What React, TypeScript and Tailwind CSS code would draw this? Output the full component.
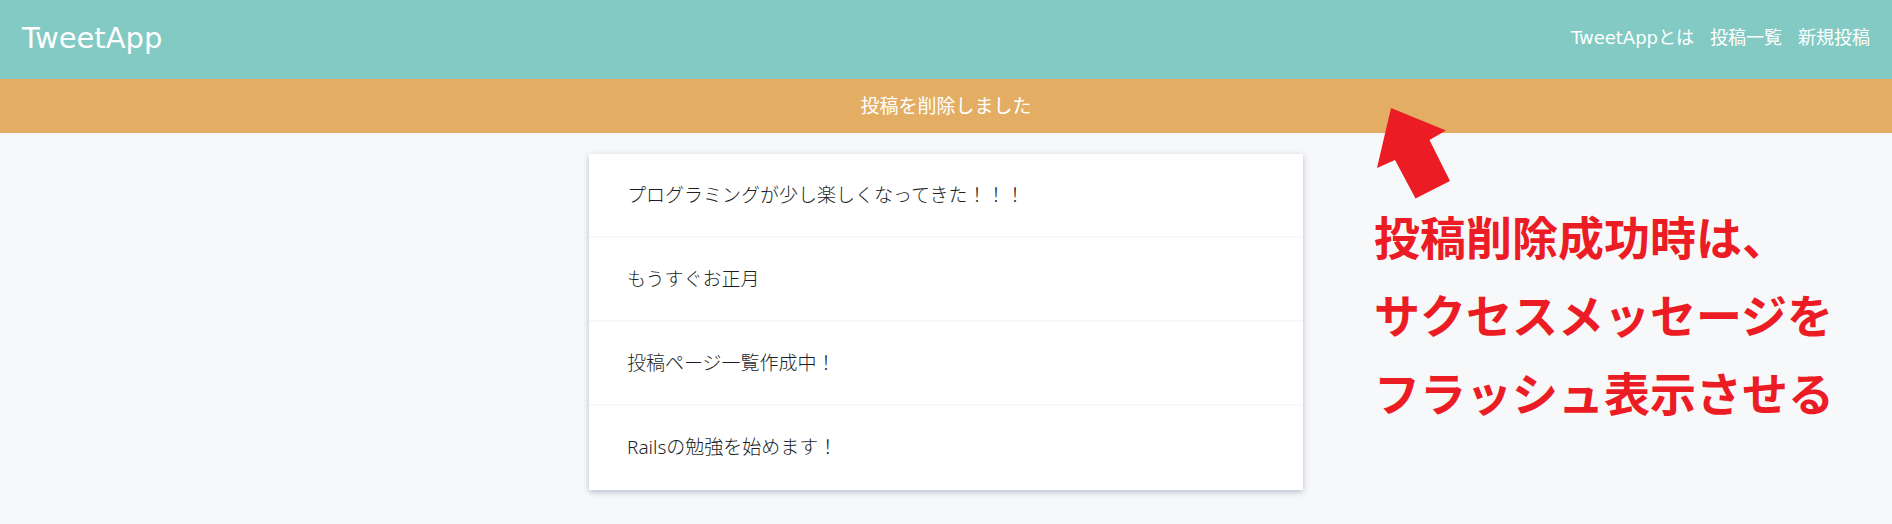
const links = ["TweetAppとは", "投稿一覧", "新規投稿"];

const posts = [
  "プログラミングが少し楽しくなってきた！！！",
  "もうすぐお正月",
  "投稿ページ一覧作成中！",
  "Railsの勉強を始めます！",
];

function Header() {
  return (
    <header className="flex h-[79px] items-center justify-between bg-[#82cac3] px-[22px] pb-1 text-white">
      <a href="#top" className="text-[29px] leading-9">
        TweetApp
      </a>
      <nav>
        <ul className="flex gap-4 text-[18px] leading-6">
          {links.map((label) => (
            <li key={label}>
              <a href="#posts">{label}</a>
            </li>
          ))}
        </ul>
      </nav>
    </header>
  );
}

function Annotation() {
  return (
    <aside className="absolute top-[108px] right-[58px] text-[#ec1c24]">
      <svg className="ml-[3px] block h-[92px] w-[73px]" viewBox="0 0 73 92" fill="currentColor" aria-hidden="true">
        <path d="M14 0 69 22.500 52.500 32 73 73 38.500 90.500 18 52 0 60Z" />
      </svg>
      <p className="text-[46px] leading-[78px] font-bold whitespace-nowrap">
        投稿削除成功時は、
        <br />
        サクセスメッセージを
        <br />
        フラッシュ表示させる
      </p>
    </aside>
  );
}

export default function App() {
  return (
    <div
      lang="ja"
      className="relative min-h-screen bg-[#f7f8fa] font-['DejaVu_Sans','Noto_Sans_CJK_JP',sans-serif] text-[#2b2e38]"
    >
      <Header />
      <div role="status" className="bg-[#e3ae64] py-[14px] text-center text-[19px] leading-[26px] text-white">
        投稿を削除しました
      </div>
      <main id="posts" className="px-4 py-[21px]">
        <ul className="mx-auto max-w-[714px] bg-white shadow-[0_2px_6px_#b4bcc8]">
          {posts.map((post) => (
            <li
              key={post}
              className="border-b-2 border-[#f7f8fa] px-[38px] py-7 font-['Noto_Sans','Noto_Sans_CJK_JP',sans-serif] text-[19px] leading-[26px] font-light text-[#1c1f28] last:border-white"
            >
              <a href="#post">{post}</a>
            </li>
          ))}
        </ul>
      </main>
      <Annotation />
    </div>
  );
}
